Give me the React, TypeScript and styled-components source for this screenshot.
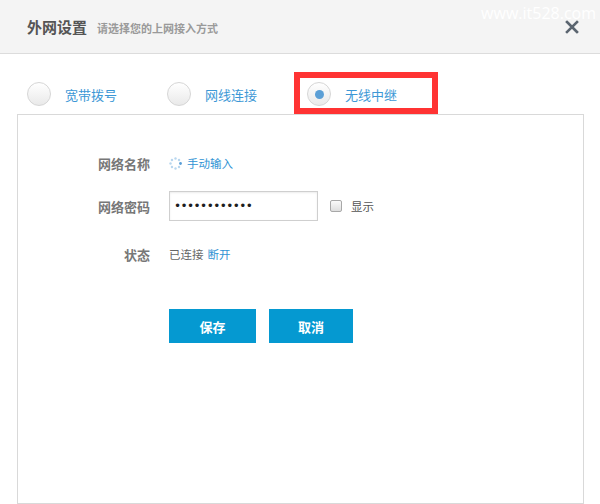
import styled, { createGlobalStyle } from "styled-components";

const GlobalStyle = createGlobalStyle`
  html, body {
    margin: 0;
    padding: 0;
    background: #fff;
  }
  body {
    font-family: "Noto Sans CJK SC", "Noto Sans", sans-serif;
  }
`;

const Dialog = styled.div`
  width: 600px;
  height: 504px;
  position: relative;
  overflow: hidden;
  background: #fff;
`;

const Header = styled.div`
  height: 53px;
  border-bottom: 1px solid #dcdcdc;
  background: #f4f4f4;
  display: flex;
  align-items: center;
  justify-content: space-between;
  padding: 0 21px 0 27px;
`;

const TitleGroup = styled.div`
  display: flex;
  align-items: baseline;
  gap: 10px;
`;

const Title = styled.span`
  font-size: 15px;
  font-weight: 700;
  color: #555;
`;

const Subtitle = styled.span`
  font-size: 11px;
  font-weight: 700;
  color: #9a9a9a;
`;

const CloseButton = styled.button`
  border: none;
  background: transparent;
  padding: 0;
  width: 14px;
  height: 14px;
  display: flex;
  cursor: pointer;
`;

const Watermark = styled.span`
  position: absolute;
  top: 2px;
  right: 4px;
  font-family: "Open Sans", sans-serif;
  font-size: 16px;
  color: #fff;
`;

const Tabs = styled.div`
  display: flex;
  padding: 28px 0 8px 27px;
`;

const Tab = styled.div`
  position: relative;
  width: 140px;
  display: flex;
  align-items: center;
  gap: 14px;
  cursor: pointer;
`;

const Radio = styled.span<{ $checked?: boolean }>`
  width: 22px;
  height: 22px;
  border-radius: 50%;
  border: 1px solid #d6d6d6;
  background: linear-gradient(#ffffff, #e9e9e9);
  display: flex;
  align-items: center;
  justify-content: center;
  &::after {
    content: "";
    display: ${(p) => (p.$checked ? "block" : "none")};
    width: 9px;
    height: 9px;
    border-radius: 50%;
    background: #5b9fd6;
  }
`;

const TabLabel = styled.span`
  font-size: 13px;
  color: #3d98d6;
`;

const Highlight = styled.span`
  position: absolute;
  left: -13px;
  top: -10px;
  width: 132px;
  height: 30px;
  border: 6px solid #ff3333;
  pointer-events: none;
`;

const Panel = styled.div`
  margin: 0 16px 0 17px;
  border: 1px solid #d9d9d9;
  padding-top: 33px;
  box-sizing: border-box;
  height: 390px;
`;

const Row = styled.div<{ $gap?: number }>`
  display: flex;
  align-items: center;
  height: 30px;
  margin-top: ${(p) => p.$gap ?? 0}px;
`;

const Label = styled.span`
  width: 132px;
  margin-right: 19px;
  text-align: right;
  font-size: 13px;
  font-weight: 700;
  color: #777;
`;

const LinkText = styled.a`
  font-size: 11.5px;
  color: #2f93d4;
  text-decoration: none;
  cursor: pointer;
`;

const ManualInput = styled.span`
  display: flex;
  align-items: center;
  gap: 5px;
`;

const PasswordInput = styled.input`
  width: 149px;
  height: 30px;
  box-sizing: border-box;
  border: 1px solid #cfcfcf;
  box-shadow: inset 0 1px 2px rgba(0, 0, 0, 0.08);
  padding: 0 0 0 4px;
  font-family: "DejaVu Sans", sans-serif;
  font-size: 12px;
  letter-spacing: -0.55px;
  color: #1e1e1e;
  outline: none;
`;

const ShowToggle = styled.label`
  display: flex;
  align-items: center;
  gap: 9px;
  margin-left: 12px;
  font-size: 11.5px;
  color: #555;
`;

const CheckBox = styled.span`
  width: 10px;
  height: 10px;
  border: 1px solid #a8a8a8;
  border-radius: 2px;
  background: linear-gradient(#fafafa, #dedede);
`;

const StatusText = styled.span`
  font-size: 11.5px;
  color: #666;
  display: flex;
  gap: 4px;
`;

const Actions = styled.div`
  display: flex;
  gap: 13px;
  margin: 40px 0 0 151px;
`;

const Button = styled.button<{ $w: number }>`
  width: ${(p) => p.$w}px;
  height: 34px;
  border: none;
  background: #0599d1;
  color: #fff;
  font-family: "Noto Sans CJK SC", sans-serif;
  font-size: 13px;
  font-weight: 700;
  cursor: pointer;
`;

const Spinner = () => (
  <svg width="13" height="13" viewBox="0 0 13 13">
    {Array.from({ length: 8 }).map((_, i) => {
      const a = (i * Math.PI) / 4;
      const dark = i === 0;
      return (
        <circle
          key={i}
          cx={6.5 + 5 * Math.cos(a)}
          cy={6.5 + 5 * Math.sin(a)}
          r={dark ? 1.4 : 1.2}
          fill={dark ? "#5a9fd8" : "#b9d7ef"}
        />
      );
    })}
  </svg>
);

const tabs = ["宽带拨号", "网线连接", "无线中继"];

export default function App() {
  return (
    <Dialog>
      <GlobalStyle />
      <Header>
        <TitleGroup>
          <Title>外网设置</Title>
          <Subtitle>请选择您的上网接入方式</Subtitle>
        </TitleGroup>
        <CloseButton aria-label="close">
          <svg width="14" height="14" viewBox="0 0 14 14">
            <path
              d="M2 2 L12 12 M12 2 L2 12"
              stroke="#5b6570"
              strokeWidth="2.6"
              strokeLinecap="square"
            />
          </svg>
        </CloseButton>
      </Header>
      <Watermark>www.it528.com</Watermark>

      <Tabs>
        {tabs.map((t, i) => (
          <Tab key={t}>
            {i === 2 && <Highlight />}
            <Radio $checked={i === 2} />
            <TabLabel>{t}</TabLabel>
          </Tab>
        ))}
      </Tabs>

      <Panel>
        <Row>
          <Label>网络名称</Label>
          <ManualInput>
            <Spinner />
            <LinkText>手动输入</LinkText>
          </ManualInput>
        </Row>
        <Row $gap={13}>
          <Label>网络密码</Label>
          <PasswordInput type="password" readOnly value="123456789012" />
          <ShowToggle>
            <CheckBox />
            显示
          </ShowToggle>
        </Row>
        <Row $gap={18}>
          <Label>状态</Label>
          <StatusText>
            已连接
            <LinkText>断开</LinkText>
          </StatusText>
        </Row>
        <Actions>
          <Button $w={87}>保存</Button>
          <Button $w={84}>取消</Button>
        </Actions>
      </Panel>
    </Dialog>
  );
}
